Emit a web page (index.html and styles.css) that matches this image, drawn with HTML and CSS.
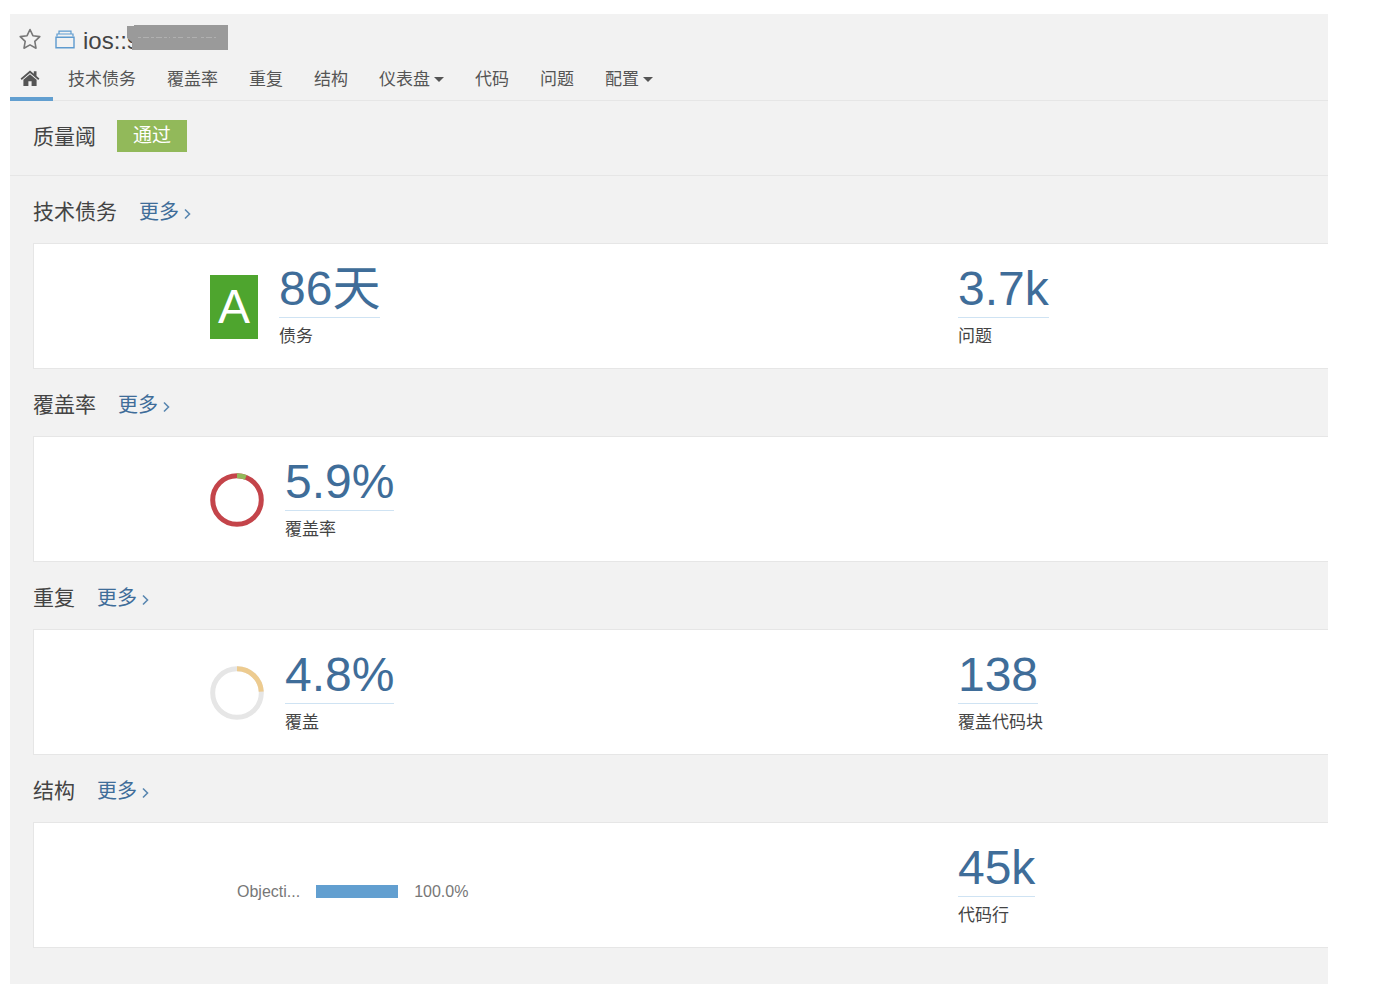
FILE: index.html
```html
<!DOCTYPE html>
<html lang="zh-CN">
<head>
<meta charset="utf-8">
<title>ios 质量概览</title>
<link rel="stylesheet" href="styles.css">
</head>
<body>
<div class="page">
  <header class="header">
    <div class="project">
      <button class="star" type="button" aria-label="收藏">
        <svg width="22" height="22" viewBox="0 0 22 22"><path d="M11 1.500l2.900 6.200 6.900.9-5 4.700 1.200 6.900-6-3.300-6 3.300 1.200-6.900-5-4.700 6.900-.9z" fill="none" stroke="#777" stroke-width="1.600" stroke-linejoin="round"/></svg>
      </button>
      <svg class="project-icon" width="20" height="19" viewBox="0 0 20 19" fill="none" stroke="#5e9bcf"><path d="M1 7.200h18v10.600H1z" stroke-width="1.400"/><path d="M2 6.500V4h16v2.500M4 3.800V1.200h12v2.600" stroke-width="1.200"/></svg>
      <h1 class="project-name">ios::s</h1>
      <svg class="mask" width="101" height="25" viewBox="0 0 101 25"><path d="M0 1h7V0h94v25H5V17L0 13z" fill="#9a9a9a"/><path d="M11 12.500h32M46 12.500h10M60 12.500h10M74 12.500h15" stroke="#b0b0b0" stroke-dasharray="3 2 6 2"/></svg>
    </div>
    <nav class="nav">
      <a class="tab home" href="#" aria-label="首页"><svg width="20" height="17" viewBox="0 0 20 17" fill="#555"><path d="M10 .6L.6 8.600l1.100 1.300L10 3l8.300 6.900 1.100-1.300-2.900-2.500V1.300h-2.700v2.500z"/><path d="M10 4.300l-6.600 5.500V16h5v-4.700h3.200V16h5V9.800z"/></svg></a>
      <a class="tab" href="#">技术债务</a>
      <a class="tab" href="#">覆盖率</a>
      <a class="tab" href="#">重复</a>
      <a class="tab" href="#">结构</a>
      <button class="tab" type="button">仪表盘<span class="caret"></span></button>
      <a class="tab" href="#">代码</a>
      <a class="tab" href="#">问题</a>
      <button class="tab" type="button">配置<span class="caret"></span></button>
    </nav>
  </header>
  <main>
    <section class="gate">
      <h2 class="title">质量阈</h2>
      <span class="status">通过</span>
    </section>

    <section class="domain">
      <div class="domain-head"><h2 class="title">技术债务</h2><a class="more" href="#">更多<svg class="chevron" width="7" height="12" viewBox="0 0 7 12"><path d="M1 1.500L5.500 6 1 10.500"/></svg></a></div>
      <div class="card">
        <div class="cell">
          <span class="rating">A</span>
          <div class="measure"><a class="value" href="#">86天</a><span class="label">债务</span></div>
        </div>
        <div class="cell"><div class="measure"><a class="value" href="#">3.7k</a><span class="label">问题</span></div></div>
      </div>
    </section>

    <section class="domain">
      <div class="domain-head"><h2 class="title">覆盖率</h2><a class="more" href="#">更多<svg class="chevron" width="7" height="12" viewBox="0 0 7 12"><path d="M1 1.500L5.500 6 1 10.500"/></svg></a></div>
      <div class="card">
        <div class="cell">
          <svg class="donut" width="54" height="54" viewBox="0 0 54 54"><circle cx="27" cy="27" r="24.300" stroke="#c4444a"/><circle cx="27" cy="27" r="24.300" stroke="#92b95a" pathLength="100" stroke-dasharray="5.900 94.100" transform="rotate(-90 27 27)"/></svg>
          <div class="measure"><a class="value" href="#">5.9%</a><span class="label">覆盖率</span></div>
        </div>
      </div>
    </section>

    <section class="domain">
      <div class="domain-head"><h2 class="title">重复</h2><a class="more" href="#">更多<svg class="chevron" width="7" height="12" viewBox="0 0 7 12"><path d="M1 1.500L5.500 6 1 10.500"/></svg></a></div>
      <div class="card">
        <div class="cell">
          <svg class="donut" width="54" height="54" viewBox="0 0 54 54"><circle cx="27" cy="27" r="24.300" stroke="#e6e6e6"/><circle cx="27" cy="27" r="24.300" stroke="#edcb8f" pathLength="100" stroke-dasharray="24 76" transform="rotate(-90 27 27)"/></svg>
          <div class="measure"><a class="value" href="#">4.8%</a><span class="label">覆盖</span></div>
        </div>
        <div class="cell"><div class="measure"><a class="value" href="#">138</a><span class="label">覆盖代码块</span></div></div>
      </div>
    </section>

    <section class="domain">
      <div class="domain-head"><h2 class="title">结构</h2><a class="more" href="#">更多<svg class="chevron" width="7" height="12" viewBox="0 0 7 12"><path d="M1 1.500L5.500 6 1 10.500"/></svg></a></div>
      <div class="card">
        <div class="cell">
          <div class="language"><span>Objecti...</span><span class="bar"></span><span>100.0%</span></div>
        </div>
        <div class="cell"><div class="measure"><a class="value" href="#">45k</a><span class="label">代码行</span></div></div>
      </div>
    </section>
  </main>
</div>
</body>
</html>
```
FILE: styles.css
```css
* { box-sizing: border-box; }

body {
  margin: 0;
  padding: 14px 64px 14px 10px;
  background: #fff;
  color: #444;
  font: 17px/26px "Liberation Sans", "Noto Sans CJK SC", sans-serif;
}

a { color: inherit; text-decoration: none; }
button { padding: 0; border: 0; background: none; color: inherit; font: inherit; cursor: pointer; }
svg { display: block; flex: none; }
h1, h2 { margin: 0; font-weight: 400; }

.page { padding-bottom: 36px; background: #f2f2f2; }

.header { border-bottom: 1px solid #e6e6e6; }
.project { display: flex; align-items: center; height: 50px; padding-left: 9px; }
.project-icon { margin-left: 14px; }
.project-name { margin-left: 8px; padding-top: 4px; font-size: 24px; line-height: 28px; }
.mask { margin: 0 0 3px -12px; }

.nav { display: flex; gap: 31px; margin-bottom: -1px; }
.tab { display: flex; align-items: center; height: 37px; padding-bottom: 6px; color: #555; white-space: nowrap; }
.home { justify-content: center; width: 43px; margin-right: -16px; border-bottom: 4px solid #629fd0; padding-bottom: 4px; padding-right: 4px; }
.caret { margin-left: 4px; border: 5px solid transparent; border-top-color: #555; border-bottom: 0; }

.gate { display: flex; align-items: center; gap: 21px; padding: 18px 23px 22px; border-bottom: 1px solid #e6e6e6; }
.title { padding-top: 2px; font-size: 21px; line-height: 32px; }
.status { padding: 0 16px; background: #92b95a; color: #fff; font-size: 19px; line-height: 32px; }

.domain { padding-left: 23px; }
.domain-head { display: flex; align-items: center; gap: 22px; padding: 18px 0 15px; }
.more { display: flex; align-items: center; padding-top: 2px; color: #3f6d99; font-size: 20px; line-height: 32px; }
.chevron { margin: 4px 0 0 5px; fill: none; stroke: #5a87b0; stroke-width: 1.6; }

.card {
  display: grid;
  grid-template-columns: 669fr 331fr;
  min-height: 126px;
  padding: 19px 0 18px 176px;
  border: 1px solid #e6e6e6;
  border-right: 0;
  background: #fff;
}
.cell { display: flex; align-items: center; gap: 21px; }
.rating { width: 48px; background: #4ea52e; color: #fff; font-size: 48px; line-height: 64px; text-align: center; }
.donut { fill: none; stroke-width: 5; }
.measure { display: flex; flex-direction: column; align-items: flex-start; gap: 6px; }
.value { padding-bottom: 2px; border-bottom: 1px solid #cfe3f3; color: #3f6d99; font-size: 48px; line-height: 52px; }
.language { display: flex; align-items: center; gap: 16px; padding: 12px 0 0 27px; color: #777; font-size: 16px; }
.bar { width: 82px; height: 13px; background: #629fd0; }
```
